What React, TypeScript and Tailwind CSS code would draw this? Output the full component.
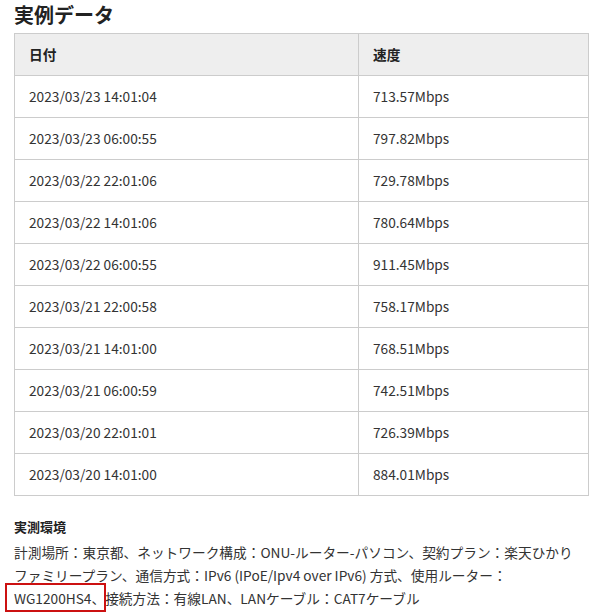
const rows = [
  ['2023/03/23 14:01:04', '713.57Mbps'],
  ['2023/03/23 06:00:55', '797.82Mbps'],
  ['2023/03/22 22:01:06', '729.78Mbps'],
  ['2023/03/22 14:01:06', '780.64Mbps'],
  ['2023/03/22 06:00:55', '911.45Mbps'],
  ['2023/03/21 22:00:58', '758.17Mbps'],
  ['2023/03/21 14:01:00', '768.51Mbps'],
  ['2023/03/21 06:00:59', '742.51Mbps'],
  ['2023/03/20 22:01:01', '726.39Mbps'],
  ['2023/03/20 14:01:00', '884.01Mbps'],
];

export default function App() {
  return (
    <div
      className="w-[600px] h-[615px] bg-white text-[#333] overflow-hidden pl-[14px] pr-[11px]"
      style={{ fontFamily: '"Noto Sans CJK JP", "Noto Sans", sans-serif' }}
    >
      <h2 className="text-[20px] font-bold leading-[30px] text-[#222]">実例データ</h2>
      <table className="mt-[3px] w-[575px] border-collapse text-[13.7px]">
        <thead>
          <tr className="bg-[#eeeeee]">
            <th className="w-[344px] h-[42px] border border-[#cccccc] text-left font-bold pl-[14px] text-[#222]">日付</th>
            <th className="h-[42px] border border-[#cccccc] text-left font-bold pl-[14px] text-[#222]">速度</th>
          </tr>
        </thead>
        <tbody>
          {rows.map(([d, s]) => (
            <tr key={d} className="h-[42px]">
              <td className="border border-[#cccccc] pl-[14px]">{d}</td>
              <td className="border border-[#cccccc] pl-[14px]">{s}</td>
            </tr>
          ))}
        </tbody>
      </table>
      <div className="mt-[20px] text-[13px] font-bold leading-[22px] text-[#222]">実測環境</div>
      <p className="mt-[3px] text-[13.7px] leading-[23px]">
        計測場所：東京都、ネットワーク構成：ONU-ルーター-パソコン、契約プラン：楽天ひかり
        <br />
        ファミリープラン、通信方式：IPv6 (IPoE/Ipv4 over IPv6) 方式、使用ルーター：
        <br />
        <span className="relative">
          WG1200HS4、
          <span className="absolute -left-[9px] -right-[1px] -top-[5px] -bottom-[4px] border-2 border-[#cc1111]" />
        </span>
        接続方法：有線LAN、LANケーブル：CAT7ケーブル
      </p>
    </div>
  );
}
